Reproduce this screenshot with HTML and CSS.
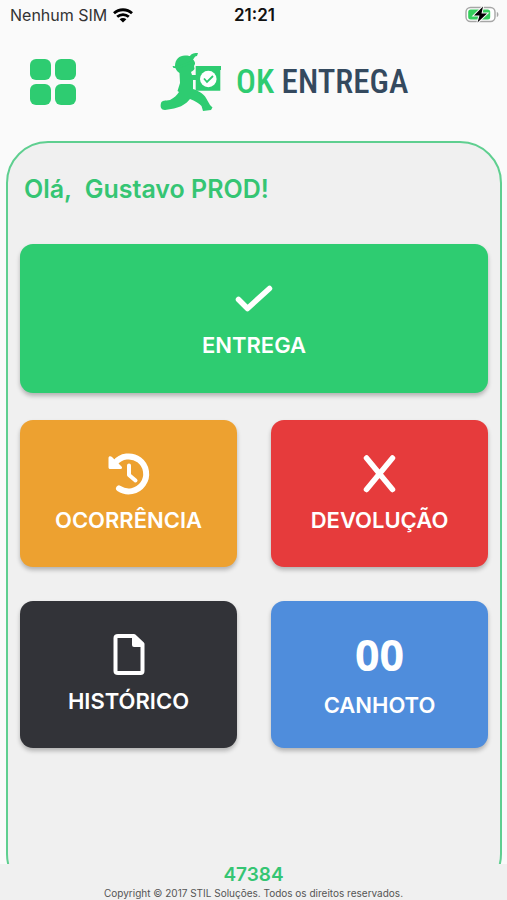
FILE: index.html
```html
<!DOCTYPE html>
<html lang="pt-BR">
<head>
    <meta charset="UTF-8">
    <meta name="viewport" content="width=device-width, initial-scale=1.0">
    <title>OK Entrega</title>
    <link rel="stylesheet" href="styles.css">
</head>
<body>
    <div class="status-bar">
        <div class="carrier">
            <span>Nenhum SIM</span>
            <svg width="20" height="15" viewBox="0 0 20 15">
                <g fill="none" stroke="#000" stroke-width="2.8">
                    <path d="M1 5.2C6 .6 14 .6 19 5.2"/>
                    <path d="M4.2 8.8C7.6 5.8 12.4 5.8 15.8 8.8"/>
                </g>
                <path d="M6.6 11.2C8.6 9.5 11.4 9.5 13.4 11.2L10 14.6Z"/>
            </svg>
        </div>
        <div class="time">21:21</div>
        <div class="battery">
            <svg width="34" height="18" viewBox="0 0 34 18">
                <rect x="1" y="1.5" width="29" height="14" rx="4.5" fill="#fff" stroke="#a6a6a6" stroke-width="1.4"/>
                <rect x="3.2" y="3.5" width="22" height="10" rx="2.5" fill="#35cf5c"/>
                <path d="M31.8 6C34 6.5 34 10.5 31.8 11Z" fill="#a6a6a6"/>
                <path d="M18 .5L9 9.5H14.5L12.5 16.5L22 7.5H16.5Z" fill="#000" stroke="#fafafa" stroke-width="2" paint-order="stroke"/>
            </svg>
        </div>
    </div>

    <header class="header">
        <button class="menu-button" aria-label="Menu">
            <svg width="46" height="46" viewBox="0 0 46 46" fill="#2ecc71">
                <rect width="21" height="21" rx="6"/>
                <rect x="25" width="21" height="21" rx="6"/>
                <rect y="25" width="21" height="21" rx="6"/>
                <rect x="25" y="25" width="21" height="21" rx="6"/>
            </svg>
        </button>
        <div class="logo">
            <svg width="62" height="60" viewBox="0 0 62 60" fill="#2ecc71">
                <path d="M15 14C15 7 20 3 26 3.5C28 3.5 29 4 30 4C31 1.5 35 1 38 1L37 4C35 4 34 6 33 8C35 9 35 11 35 12L34 14L34.5 17C33 19 32 19.5 31 20L32 23H36V28H33V37C39 39 44 42 46 46L50 53L52.5 55.5L51 58L43 59L41.5 54C39 51 35 49 30 47C26 52 21 55 14 56.5L5 58C1 58 0 55 1 51C2 48 5 49 10 48C14 46 17 43 19 40L17.5 39L20 31L19.5 21C17 19.5 15.5 17 15.5 15.5Z"/>
                <path d="M12.5 14C19 15 27 10 34 8L33 11C27 13 20 17 13.5 16Z"/>
                <path d="M35.7 14H61V18H60.3V38.7H35.7Z"/>
                <circle cx="48.3" cy="27" r="8.3" fill="#fff"/>
                <path d="M44 26.5L47 30L53 24" fill="none" stroke="#2ecc71" stroke-width="1.8"/>
            </svg>
            <div class="logo-text"><span class="logo-ok">OK</span> ENTREGA</div>
        </div>
    </header>

    <main class="main">
        <div class="panel">
            <h1 class="greeting">Olá,&nbsp; Gustavo PROD!</h1>
            <div class="grid">
                <button class="card card-entrega">
                    <svg width="44" height="44" viewBox="0 0 44 44">
                        <path d="M6.5 22.5L15.5 31.5L37.5 11.5" fill="none" stroke="#fff" stroke-width="5.5" stroke-linecap="round" stroke-linejoin="round"/>
                    </svg>
                    <span>ENTREGA</span>
                </button>
                <button class="card card-ocorrencia">
                    <svg width="44" height="44" viewBox="0 0 44 44">
                        <g fill="none" stroke="#fff" stroke-linecap="round" stroke-linejoin="round">
                            <path d="M8 11A17.5 17.5 0 1 1 12 36.5" stroke-width="6"/>
                            <path d="M22 13.5V23L28.5 28.5" stroke-width="4"/>
                        </g>
                        <path d="M1.5 6C1.5 4 3.5 3.5 5 5L14.5 14.5C15.5 15.5 15 17 13.5 17H3.5C2 17 1.5 16.5 1.5 15Z" fill="#fff"/>
                    </svg>
                    <span>OCORRÊNCIA</span>
                </button>
                <button class="card card-devolucao">
                    <svg width="44" height="44" viewBox="0 0 44 44">
                        <path d="M8.5 6L34.5 37.5M34.5 6L8.5 37.5" fill="none" stroke="#fff" stroke-width="5.5" stroke-linecap="round"/>
                    </svg>
                    <span>DEVOLUÇÃO</span>
                </button>
                <button class="card card-historico">
                    <svg width="44" height="44" viewBox="0 0 44 44">
                        <path d="M11 3H27L35.5 11V38Q35.5 40 33.5 40H11Q8.5 40 8.5 38V5Q8.5 3 11 3Z" fill="none" stroke="#fff" stroke-width="4" stroke-linejoin="round"/>
                        <path d="M25 3V12Q25 14 27 14H37V11L28 3Z" fill="#fff"/>
                    </svg>
                    <span>HISTÓRICO</span>
                </button>
                <button class="card card-canhoto">
                    <strong class="card-count">00</strong>
                    <span>CANHOTO</span>
                </button>
            </div>
        </div>
    </main>

    <footer class="footer">
        <div class="version">47384</div>
        <div class="copyright">Copyright © 2017 STIL Soluções. Todos os direitos reservados.</div>
    </footer>
</body>
</html>
```
FILE: styles.css
```css
* {
    box-sizing: border-box;
}
body {
    font-family: Inter, "Liberation Sans", sans-serif;
    margin: 0;
    min-height: 100vh;
    background-color: #fafafa;
    display: flex;
    flex-direction: column;
}
button {
    border: none;
    padding: 0;
    font-family: inherit;
    cursor: pointer;
}
svg {
    display: block;
    flex-shrink: 0;
}

/* Status bar */
.status-bar {
    display: grid;
    grid-template-columns: 1fr auto 1fr;
    align-items: center;
    height: 30px;
    padding: 0 8px 0 10px;
    font-size: 16px;
    color: #333;
}
.carrier {
    display: flex;
    align-items: center;
    gap: 6px;
}
.time {
    font-size: 17px;
    font-weight: 600;
    color: #111;
}
.battery {
    justify-self: end;
}

/* Header */
.header {
    display: flex;
    align-items: center;
    height: 111px;
    padding: 0 30px 8px;
}
.menu-button {
    background: none;
}
.logo {
    display: flex;
    align-items: center;
    gap: 14px;
    margin-left: 84px;
}
.logo-text {
    font-family: "Liberation Sans Narrow", "Roboto Condensed", Roboto, sans-serif;
    font-size: 33px;
    line-height: 40px;
    font-weight: 500;
    white-space: nowrap;
    color: #34495e;
}
.logo-ok {
    color: #2ecc71;
}

/* Content */
.main {
    flex: 1;
    display: flex;
    overflow: hidden;
}
.panel {
    flex: 1;
    margin: 0 5px -32px 6px;
    padding: 30px 12px 60px;
    border: 2px solid #5fcf90;
    border-radius: 42px;
    background-color: #f0f0f0;
}
.greeting {
    margin: 0 0 39px 4px;
    font-size: 25px;
    line-height: 32px;
    font-weight: 600;
    color: #35c573;
}
.grid {
    display: grid;
    grid-template-columns: 1fr 1fr;
    gap: 34px;
}
.card {
    display: flex;
    flex-direction: column;
    align-items: center;
    justify-content: center;
    gap: 12px;
    height: 147px;
    padding-bottom: 3px;
    border-radius: 13px;
    box-shadow: 0 3px 4px rgba(0, 0, 0, 0.25);
    color: white;
    font-size: 22px;
    line-height: 24px;
    font-weight: 600;
}
.card-entrega {
    grid-column: 1 / -1;
    height: 149px;
    margin-bottom: -7px;
    background-color: #2ecc71;
}
.card-ocorrencia {
    background-color: #eda130;
}
.card-devolucao {
    background-color: #e63b3c;
}
.card-historico {
    background-color: #323338;
}
.card-canhoto {
    background-color: #4f8ddc;
}
.card-count {
    font-family: "Noto Sans", "Open Sans", sans-serif;
    font-size: 43px;
    line-height: 52px;
    font-weight: 700;
}

/* Footer */
.footer {
    height: 36px;
    background-color: #f0f0f0;
    text-align: center;
}
.version {
    font-size: 19px;
    line-height: 22px;
    font-weight: 600;
    color: #35c573;
}
.copyright {
    font-size: 10px;
    line-height: 14px;
    color: #555;
}
```
